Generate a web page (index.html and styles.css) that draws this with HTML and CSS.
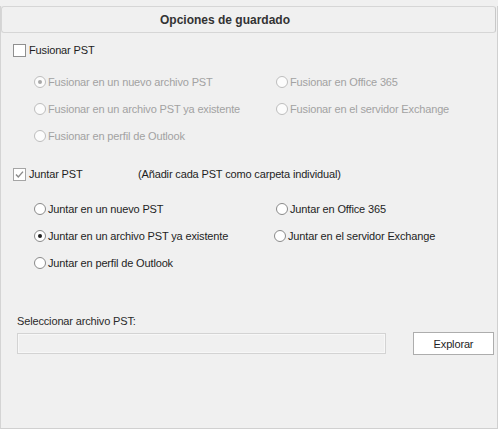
FILE: index.html
```html
<!DOCTYPE html>
<html lang="es">
<head>
<meta charset="utf-8">
<title>Opciones de guardado</title>
<link rel="stylesheet" href="styles.css">
</head>
<body>
<div class="panel">
  <div class="header">Opciones de guardado</div>

  <div class="check-row fusion-check">
    <span class="checkbox"></span>
    <span class="check-label">Fusionar PST</span>
  </div>

  <div class="radio-grid fusion-grid disabled">
    <div class="radio-item"><span class="radio checked"></span><span>Fusionar en un nuevo archivo PST</span></div>
    <div class="radio-item"><span class="radio"></span><span>Fusionar en Office 365</span></div>
    <div class="radio-item"><span class="radio"></span><span>Fusionar en un archivo PST ya existente</span></div>
    <div class="radio-item"><span class="radio"></span><span>Fusionar en el servidor Exchange</span></div>
    <div class="radio-item"><span class="radio"></span><span>Fusionar en perfil de Outlook</span></div>
  </div>

  <div class="check-row juntar-check">
    <span class="checkbox checked">
      <svg width="11" height="11" viewBox="0 0 11 11"><path d="M2 5.5 L4.3 8 L9 2.6" fill="none" stroke="#8a8a8a" stroke-width="1.4"/></svg>
    </span>
    <span class="check-label">Juntar PST</span>
    <span class="note">(Añadir cada PST como carpeta individual)</span>
  </div>

  <div class="radio-grid juntar-grid">
    <div class="radio-item"><span class="radio"></span><span>Juntar en un nuevo PST</span></div>
    <div class="radio-item"><span class="radio"></span><span>Juntar en Office 365</span></div>
    <div class="radio-item"><span class="radio checked"></span><span>Juntar en un archivo PST ya existente</span></div>
    <div class="radio-item shift-left"><span class="radio"></span><span>Juntar en el servidor Exchange</span></div>
    <div class="radio-item"><span class="radio"></span><span>Juntar en perfil de Outlook</span></div>
  </div>

  <div class="file-label">Seleccionar archivo PST:</div>
  <div class="file-row">
    <div class="file-input"></div>
    <button class="browse">Explorar</button>
  </div>
</div>
</body>
</html>
```

FILE: styles.css
```css
html, body {
  margin: 0;
  padding: 0;
  background: #f0f0f0;
}
body {
  font-family: "Liberation Sans", Arial, sans-serif;
  font-size: 11px;
  letter-spacing: -0.15px;
  color: #1e1e1e;
  width: 498px;
  height: 429px;
  overflow: hidden;
}
.panel {
  margin-top: 6px;
  width: 496px;
  height: 422px;
  border-left: 1px solid #d4d4d4;
  border-right: 1px solid #d0d0d0;
  border-bottom: 1px solid #d0d0d0;
  display: flex;
  flex-direction: column;
}
.header {
  height: 25px;
  margin-right: 1px;
  border: 1px solid #d6d6d6;
  border-right-color: #c8c8c8;
  border-radius: 3px;
  display: flex;
  align-items: center;
  padding-left: 158px;
  font-size: 12px;
  font-weight: bold;
  letter-spacing: 0;
  color: #333;
}
.check-row {
  height: 18px;
  display: flex;
  align-items: center;
  padding-left: 12px;
}
.fusion-check { margin-top: 8px; }
.juntar-check { margin-top: 16px; }
.checkbox {
  width: 11px;
  height: 11px;
  border: 1px solid #8f8f8f;
  background: #fff;
  display: flex;
  align-items: center;
  justify-content: center;
  flex: none;
}
.checkbox.checked { border-color: #a5a5a5; }
.checkbox svg { display: block; }
.check-label {
  margin-left: 3px;
  width: 110px;
}
.note { margin-left: -1px; }

.radio-grid {
  display: grid;
  grid-template-columns: 242px auto;
  grid-auto-rows: 27px;
  padding-left: 33px;
}
.fusion-grid { margin-top: 9px; }
.juntar-grid { margin-top: 12px; }
.radio-item {
  display: flex;
  align-items: center;
}
.radio-item.shift-left { margin-left: -2px; }
.radio {
  width: 10px;
  height: 10px;
  border: 1px solid #8a8a8a;
  border-radius: 50%;
  background: #fff;
  margin-right: 2px;
  flex: none;
  display: flex;
  align-items: center;
  justify-content: center;
}
.radio.checked::after {
  content: "";
  width: 4px;
  height: 4px;
  border-radius: 50%;
  background: #1e1e1e;
}
.disabled { color: #a2a2a2; }
.disabled .radio {
  border-color: #bdbdbd;
  background: #fcfcfc;
}
.disabled .radio.checked::after { background: #a8a8a8; }

.file-label {
  margin-top: 38px;
  padding-left: 16px;
  line-height: 14px;
  height: 14px;
  color: #2a2a2a;
}
.file-row {
  margin-top: 4px;
  display: flex;
  align-items: flex-start;
  padding-left: 16px;
}
.file-input {
  margin-top: 1px;
  width: 367px;
  height: 19px;
  border: 1px solid #d3d3d3;
  box-shadow: inset 0 0 0 1px #f7f7f7;
  background: #f0f0f0;
}
.browse {
  margin-left: 27px;
  width: 81px;
  height: 23px;
  border: 1px solid #adadad;
  background: #fff;
  font-family: "Liberation Sans", Arial, sans-serif;
  font-size: 11px;
  letter-spacing: -0.15px;
  color: #1e1e1e;
  padding: 0;
}
```
